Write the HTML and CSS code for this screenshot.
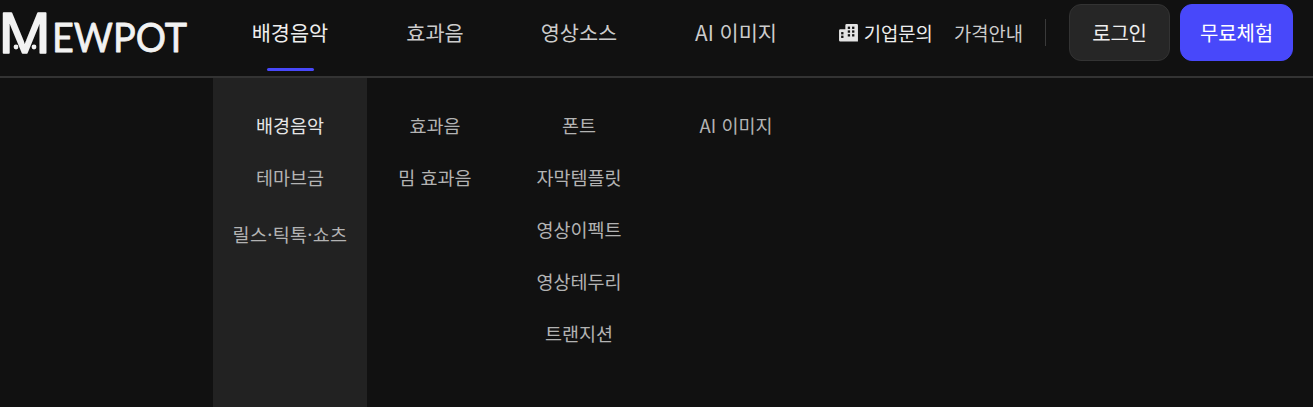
FILE: index.html
```html
<!DOCTYPE html>
<html lang="ko">
<head>
    <meta charset="UTF-8">
    <meta name="viewport" content="width=device-width, initial-scale=1.0">
    <title>MEWPOT</title>
    <link rel="stylesheet" href="styles.css">
</head>
<body>
    <header class="header">
        <a class="logo">
            <svg width="213" height="76" viewBox="0 0 213 76">
                <text class="logo-big" transform="translate(-1.500 52.500) scale(1.100 1)">M</text>
                <text class="logo-rest" x="52" y="52" textLength="135" lengthAdjust="spacingAndGlyphs">EWPOT</text>
                <circle cx="16" cy="47" r="2.400" fill="#f2f2f2"/>
                <circle cx="34" cy="47" r="2.400" fill="#f2f2f2"/>
            </svg>
        </a>
        <nav class="nav">
            <a class="nav-item col-1 active">배경음악</a>
            <a class="nav-item col-2">효과음</a>
            <a class="nav-item col-3">영상소스</a>
            <a class="nav-item col-4">AI 이미지</a>
        </nav>
        <div class="actions">
            <a class="link link-company">
                <svg class="icon" width="21" height="21" viewBox="0 0 20 20">
                    <path fill="#e4e4e4" d="M7 3.200Q7 2 8.200 2h9.600Q19 2 19 3.200V18.500H2.200Q1 18.500 1 17.300V8.200Q1 7 2.200 7H7z"/>
                    <g fill="#111">
                        <rect x="9.300" y="4.400" width="2.200" height="2.200"/><rect x="13.400" y="4.400" width="2.200" height="2.200"/>
                        <rect x="9.300" y="8" width="2.200" height="2.200"/><rect x="13.400" y="8" width="2.200" height="2.200"/>
                        <rect x="9.300" y="11.600" width="2.200" height="2.200"/><rect x="13.400" y="11.600" width="2.200" height="2.200"/>
                        <rect x="3" y="9.600" width="2.200" height="2.200"/><rect x="3" y="13" width="2.200" height="2.200"/>
                    </g>
                </svg>
                기업문의
            </a>
            <a class="link link-price">가격안내</a>
            <span class="divider"></span>
            <button class="btn btn-login">로그인</button>
            <button class="btn btn-free">무료체험</button>
        </div>
    </header>

    <div class="dropdown">
        <ul class="menu col-1 current">
            <li class="on">배경음악</li>
            <li>테마브금</li>
            <li class="tall">릴스·틱톡·쇼츠</li>
        </ul>
        <ul class="menu col-2">
            <li>효과음</li>
            <li>밈 효과음</li>
        </ul>
        <ul class="menu col-3">
            <li>폰트</li>
            <li>자막템플릿</li>
            <li>영상이펙트</li>
            <li>영상테두리</li>
            <li>트랜지션</li>
        </ul>
        <ul class="menu col-4">
            <li>AI 이미지</li>
        </ul>
    </div>
</body>
</html>
```

FILE: styles.css
```css
* {
    box-sizing: border-box;
}
html, body {
    height: 100%;
}
body {
    margin: 0;
    background-color: #111;
    font-family: "Noto Sans CJK KR", "Noto Sans", sans-serif;
    color: #ccc;
    overflow: hidden;
    display: flex;
    flex-direction: column;
}
ul {
    list-style: none;
    margin: 0;
    padding: 0;
}

.header {
    height: 78px;
    flex: none;
    display: flex;
    align-items: flex-start;
    border-bottom: 2px solid #333;
    background: #111;
}
.logo {
    width: 213px;
    flex: none;
    display: block;
}
.logo svg {
    display: block;
}
.logo-big {
    font-family: "Liberation Sans", sans-serif;
    font-size: 57px;
    fill: #f2f2f2;
    stroke: #f2f2f2;
    stroke-width: 1.500px;
    stroke-linejoin: round;
}
.logo-rest {
    font-family: "Lato", sans-serif;
    font-size: 41px;
    fill: #f2f2f2;
    stroke: #f2f2f2;
    stroke-width: 0.800px;
    stroke-linejoin: round;
}

.col-1 { width: 154px; }
.col-2 { width: 136px; }
.col-3 { width: 152px; }
.col-4 { width: 162px; }

.nav {
    display: flex;
    flex: none;
}
.nav-item {
    position: relative;
    height: 76px;
    padding-top: 18px;
    text-align: center;
    font-size: 20.800px;
    line-height: 29px;
    color: #ccc;
}
.nav-item.active {
    color: #eee;
}
.nav-item.active::after {
    content: "";
    position: absolute;
    left: 54px;
    top: 68px;
    width: 47px;
    height: 3px;
    border-radius: 2px;
    background: #4848fa;
}

.actions {
    flex: 1;
    display: flex;
    align-items: flex-start;
    padding: 4px 20px 0 0;
    justify-content: flex-end;
}
.link {
    height: 57px;
    display: flex;
    align-items: center;
    font-size: 18.800px;
    color: #ccc;
}
.link-company {
    gap: 5px;
    color: #eee;
}
.link-price {
    margin-left: 21px;
}
.icon {
    display: block;
}
.divider {
    width: 1px;
    height: 27px;
    margin: 15px 23px 0 22px;
    background: #3a3a3a;
}
.btn {
    height: 57px;
    border-radius: 12px;
    font-family: inherit;
    font-size: 20px;
    letter-spacing: -0.200px;
    padding: 0;
    color: #eee;
    border: 1px solid #333;
}
.btn-login {
    width: 101px;
    background: #262626;
}
.btn-free {
    width: 113px;
    margin-left: 10px;
    background: #4848fa;
    border-color: #4848fa;
    color: #fff;
}

.dropdown {
    flex: 1;
    display: flex;
    padding-left: 213px;
}
.menu {
    padding-top: 21px;
    text-align: center;
    font-size: 18.500px;
    line-height: 52px;
    color: #b3b3b3;
}
.menu.current {
    background: #222;
}
.menu .on {
    color: #e6e6e6;
}
.menu .tall {
    line-height: 62px;
    letter-spacing: 0.300px;
}
```
